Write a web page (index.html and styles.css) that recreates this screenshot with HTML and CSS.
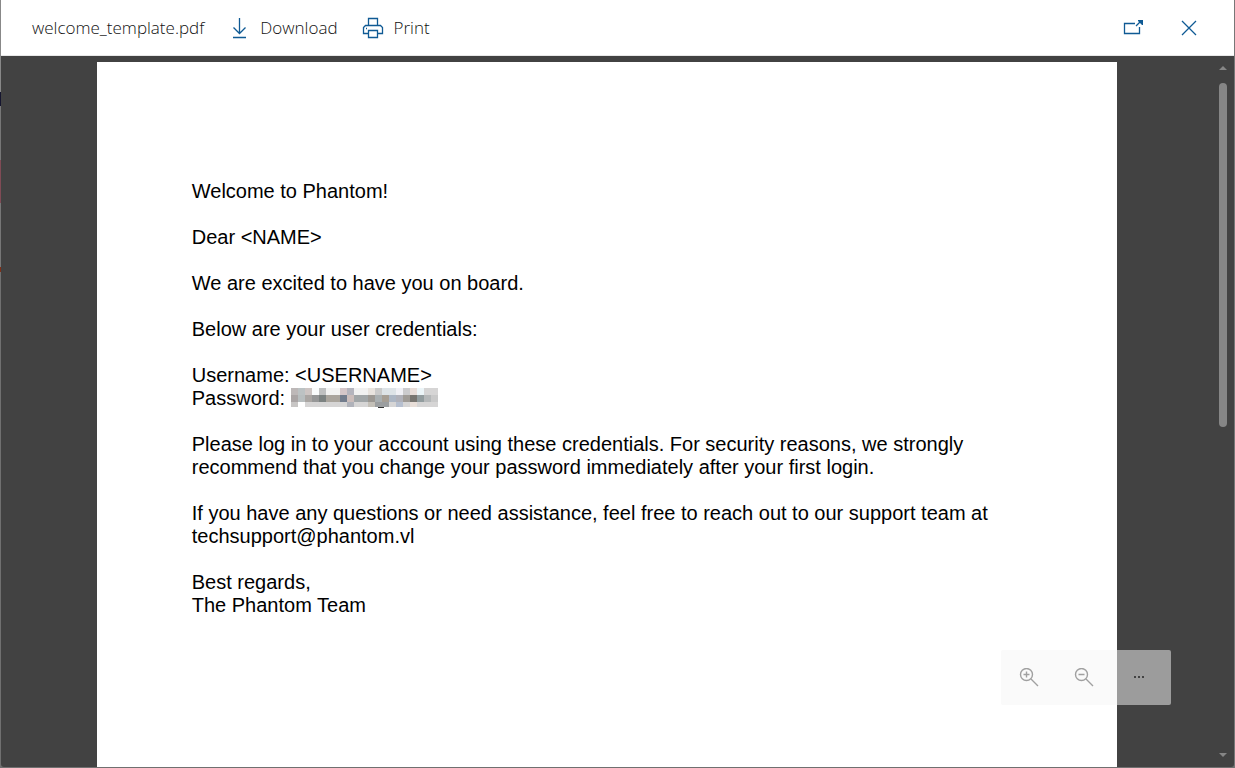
FILE: index.html
```html
<!DOCTYPE html>
<html lang="en">
<head>
<meta charset="utf-8">
<title>welcome_template.pdf</title>
<link rel="stylesheet" href="styles.css">
</head>
<body>
<div class="window">
  <header class="toolbar">
    <span class="filename">welcome_template.pdf</span>
    <button class="command download" type="button">
      <svg width="14" height="22" viewBox="0 0 14 22"><path d="M7.500 1v15M1.500 10.500l6 6 6-6M1 20.500h13"/></svg>
      <span>Download</span>
    </button>
    <button class="command print" type="button">
      <svg width="22" height="22" viewBox="0 0 22 22"><path d="M6.500 9V1.500h9V9M6 16.500H1.500v-6l2-2h15l2 2v6H16M6.500 13.500h9v7h-9zM4 11.500h1"/></svg>
      <span>Print</span>
    </button>
    <div class="window-actions">
      <button class="icon-button" type="button" aria-label="Open in new window">
        <svg width="22" height="22" viewBox="0 0 22 22"><path d="M12 6.500H1.500v10h15V10M13 9l5.500-5.500"/><path class="solid" d="M15 3h5v5h-1l-4-4z"/></svg>
      </button>
      <button class="icon-button" type="button" aria-label="Close">
        <svg width="16" height="16" viewBox="0 0 16 16"><path d="M1 1l14 14M15 1L1 15"/></svg>
      </button>
    </div>
  </header>
  <main class="viewer">
    <div class="canvas">
      <article class="sheet">
        <p>Welcome to Phantom!</p>
        <p>Dear &lt;NAME&gt;</p>
        <p>We are excited to have you on board.</p>
        <p>Below are your user credentials:</p>
        <p>Username: &lt;USERNAME&gt;<br>Password: <svg class="redacted" role="img" aria-label="Hidden password" width="147" height="20" viewBox="0 0 147 20" shape-rendering="crispEdges">
          <path fill="#d6d5d5" d="M0 0h147v20H0z"/>
          <path fill="#bdb8b8" d="M0 0h7v7H0z"/><path fill="#bcc2c3" d="M7 0h7v7H7z"/><path fill="#cdc5c3" d="M14 0h7v7h-7z"/><path fill="#fafcfc" d="M21 0h7v7h-7z"/><path fill="#bfc0c0" d="M28 0h7v7h-7z"/><path fill="#f3f3f2" d="M35 0h14v7H35z"/><path fill="#d4c6c8" d="M49 0h7v7h-7z"/><path fill="#b4b4bd" d="M56 0h7v7h-7z"/><path fill="#f1f1f1" d="M63 0h14v7H63z"/><path fill="#e8e3de" d="M77 0h7v7h-7z"/><path fill="#cacaca" d="M84 0h7v7h-7z"/><path fill="#dde3e7" d="M91 0h14v7H91z"/><path fill="#f0f0f5" d="M105 0h7v7h-7z"/><path fill="#cbcbcd" d="M112 0h7v7h-7z"/><path fill="#e8ddd8" d="M119 0h7v7h-7z"/><path fill="#ecf5f8" d="M126 0h7v7h-7z"/>
          <path fill="#aaa5a5" d="M0 7h7v7H0z"/><path fill="#b8bebf" d="M7 7h7v7H7z"/><path fill="#aaa6a3" d="M14 7h7v7h-7z"/><path fill="#969797" d="M21 7h7v7h-7z"/><path fill="#7c8281" d="M28 7h7v7h-7z"/><path fill="#aaa59d" d="M35 7h14v7H35z"/><path fill="#727c8c" d="M49 7h7v7h-7z"/><path fill="#cbbdbb" d="M56 7h7v7h-7z"/><path fill="#a1a6a8" d="M63 7h14v7H63z"/><path fill="#9c9893" d="M77 7h7v7h-7z"/><path fill="#a9afb1" d="M84 7h7v7h-7z"/><path fill="#a69e94" d="M91 7h7v7h-7z"/><path fill="#acb6c4" d="M98 7h7v7h-7z"/><path fill="#b0b1b9" d="M105 7h7v7h-7z"/><path fill="#9f9b96" d="M112 7h7v7h-7z"/><path fill="#787570" d="M119 7h7v7h-7z"/><path fill="#929c9e" d="M126 7h7v7h-7z"/><path fill="#b5b8b9" d="M133 7h7v7h-7z"/><path fill="#c9c9c9" d="M140 7h7v7h-7z"/>
          <path fill="#c8c6c5" d="M0 14h7v5H0z"/><path fill="#fff" d="M7 14h7v6H7z"/><path fill="#b0b2ba" d="M56 14h7v5h-7z"/><path fill="#c4c0b8" d="M77 14h7v5h-7z"/><path fill="#9b9ea0" d="M84 14h14v5H84z"/><path fill="#b6bfcf" d="M105 14h7v5h-7z"/><path fill="#e8ded8" d="M119 14h7v5h-7z"/>
          <path fill="#fff" d="M0 19h147v1H0z"/><path fill="#333" d="M87 19h6v1h-6z"/>
        </svg></p>
        <p>Please log in to your account using these credentials. For security reasons, we strongly recommend that you change your password immediately after your first login.</p>
        <p>If you have any questions or need assistance, feel free to reach out to our support team at techsupport@phantom.vl</p>
        <p>Best regards,<br>The Phantom Team</p>
      </article>
    </div>
    <div class="scrollbar" aria-hidden="true">
      <svg width="8" height="4" viewBox="0 0 8 4"><path d="M0 4l4-4 4 4z"/></svg>
      <div class="track"><div class="thumb"></div></div>
      <svg width="8" height="4" viewBox="0 0 8 4"><path d="M0 0h8L4 4z"/></svg>
    </div>
    <div class="zoom-bar">
      <button type="button" aria-label="Zoom in"><svg width="20" height="20" viewBox="0 0 20 20"><circle cx="7.500" cy="6.500" r="6"/><path d="M12 11l7 7M4.500 6.500h6M7.500 3.500v6"/></svg></button>
      <button type="button" aria-label="Zoom out"><svg width="20" height="20" viewBox="0 0 20 20"><circle cx="7.500" cy="6.500" r="6"/><path d="M12 11l7 7M4.500 6.500h6"/></svg></button>
      <button type="button" aria-label="More options"><svg width="10" height="4" viewBox="0 0 10 4"><path class="dots" d="M0 0h2v2H0zM4 0h2v2H4zM8 0h2v2H8z"/></svg></button>
    </div>
  </main>
</div>
</body>
</html>
```
FILE: styles.css
```css
* {
  box-sizing: border-box;
}

html {
  background: #777;
}

body {
  margin: 0;
  height: 100vh;
  padding: 0 0 1px 1px;
  border-right: 1px solid #777;
  overflow: hidden;
  background: linear-gradient(#888 0 92px, #15152f 92px 106px, #777 106px 160px, #804b55 160px 203px, #777 203px 267px, #803018 267px 272px, #707070 272px);
}

button {
  border: 0;
  padding: 0;
  background: none;
  color: inherit;
  font: inherit;
  cursor: pointer;
}

svg {
  display: block;
  fill: none;
  stroke: currentColor;
}

.window {
  display: flex;
  flex-direction: column;
  height: 100%;
  background: #424242;
  border-radius: 0 0 3px 3px;
  overflow: hidden;
}

.toolbar {
  display: flex;
  flex: none;
  align-items: center;
  height: 56px;
  padding: 0 30px;
  border-bottom: 1px solid #e8e8e8;
  background: #fff;
  color: #111;
  font: 300 17px/24px "Open Sans", "Noto Sans", sans-serif;
}

.filename {
  padding: 0 4px 0 1px;
}

.command {
  display: flex;
  align-items: center;
  gap: 10px;
  margin-left: 24px;
}

.command svg,
.icon-button svg {
  color: #0f5a94;
  stroke-width: 1.3;
}

.download {
  gap: 14px;
}

.window-actions {
  display: flex;
  gap: 36px;
  margin-left: auto;
  padding-right: 7px;
}

.icon-button {
  display: flex;
  align-items: center;
}

.icon-button .solid {
  fill: currentColor;
  stroke: none;
}

.viewer {
  position: relative;
  display: flex;
  flex: 1;
  min-height: 0;
}

.canvas {
  flex: 1;
  overflow: hidden;
  padding-top: 6px;
}

.sheet {
  width: 84.2%;
  min-height: 1320px;
  margin: 0 auto;
  padding: 118px 95px;
  background: #fff;
  color: #000;
  font: 20px/23px "Liberation Sans", Arial, sans-serif;
}

.sheet p {
  margin: 0 0 23px;
}

.redacted {
  display: inline-block;
  height: 20px;
  vertical-align: top;
  margin-top: 1px;
  stroke: none;
}

.scrollbar {
  display: flex;
  flex: none;
  flex-direction: column;
  align-items: center;
  gap: 13px;
  width: 21px;
  padding: 10px 1px 10px 0;
  color: #868686;
}

.scrollbar svg {
  fill: currentColor;
  stroke: none;
}

.track {
  flex: 1;
  width: 8px;
}

.thumb {
  height: 52.4%;
  border-radius: 4px;
  background: #868686;
}

.zoom-bar {
  position: absolute;
  right: 63px;
  bottom: 62px;
  display: flex;
  padding-right: 5px;
  border-radius: 2px;
  background: #f6f6f6;
  color: #444;
  opacity: 0.5;
}

.zoom-bar svg {
  stroke-width: 1.4;
}

.zoom-bar button {
  display: flex;
  align-items: center;
  justify-content: center;
  width: 55px;
  height: 55px;
}

.zoom-bar .dots {
  fill: currentColor;
  stroke: none;
}
```
